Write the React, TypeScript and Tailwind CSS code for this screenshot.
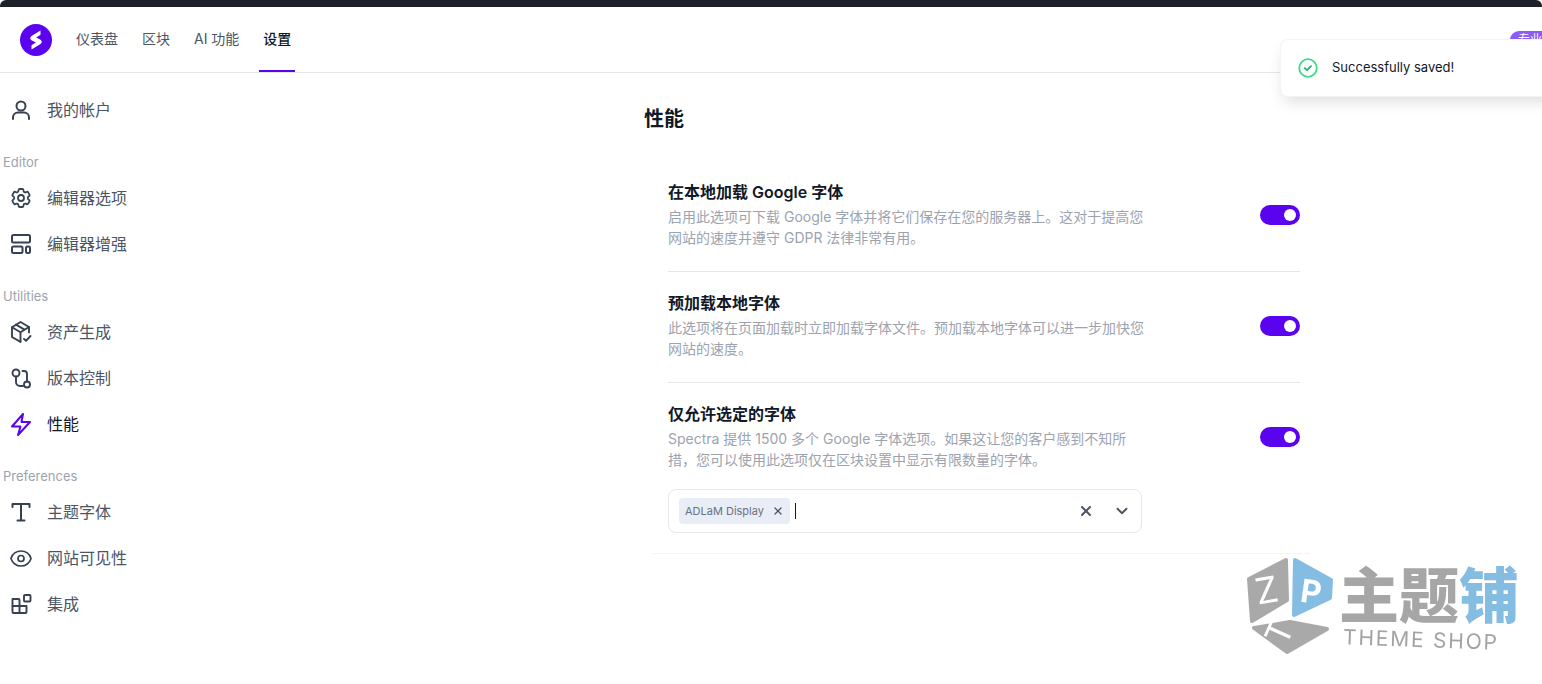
import React from "react";
import { ChevronDown, X } from "lucide-react";
import { HiOutlineCog6Tooth, HiOutlineEye } from "react-icons/hi2";

const fontStack = "font-['Inter','Noto_Sans_CJK_SC',sans-serif]";

type IconProps = { className?: string };

const Line = ({ className, children, width = 1.9 }: IconProps & { children: React.ReactNode; width?: number }) => (
  <svg viewBox="0 0 24 24" fill="none" stroke="currentColor" strokeWidth={width} strokeLinecap="round" strokeLinejoin="round" className={className}>
    {children}
  </svg>
);

const UserIcon = ({ className }: IconProps) => (
  <Line className={className} width={2}>
    <circle cx="12" cy="8" r="4.500" />
    <path d="M4 21v-1.500a5 5 0 0 1 5-5h6a5 5 0 0 1 5 5V21" />
  </Line>
);

const GearIcon = () => <HiOutlineCog6Tooth className="h-[26px] w-[26px]" strokeWidth={1.8} />;

const LayoutIcon = ({ className }: IconProps) => (
  <Line className={className} width={2}>
    <rect x="3" y="3" width="18" height="7.500" rx="1.500" />
    <rect x="3" y="14.500" width="10.500" height="6.500" rx="1.500" />
    <rect x="17" y="14.500" width="4" height="6.500" rx="1.500" />
  </Line>
);

const BoxCheckIcon = ({ className }: IconProps) => (
  <Line className={className}>
    <path d="M11.500 21.800 3 17V7.200L11.500 2l8.500 5v5.500" />
    <path d="M3 7.200l8.500 5 8.500-5.200M11.500 12.200v9.600M7 4.600l8.500 5" />
    <path d="M15 18.800l2 2 4.500-4.800" />
  </Line>
);

const BranchIcon = ({ className }: IconProps) => (
  <Line className={className}>
    <circle cx="7" cy="7" r="3.500" />
    <circle cx="18" cy="18.500" r="3" />
    <path d="M7 10.500V16a4 4 0 0 0 4 4h3" />
    <path d="M13.500 5h1.500a3 3 0 0 1 3 3v7.500" />
  </Line>
);

const BoltIcon = ({ className }: IconProps) => (
  <Line className={className} width={2}>
    <path d="M14 2 3 14.500h8.500L9 23l12-13h-8.500L14 2Z" />
  </Line>
);

const SerifTypeIcon = ({ className }: IconProps) => (
  <Line className={className} width={2}>
    <path d="M3.500 7V4h17v3M12 4v16.500M8.500 20.500h7" />
  </Line>
);

const EyeIcon = () => <HiOutlineEye className="h-[27px] w-[27px]" strokeWidth={1.7} />;

const BlocksIcon = ({ className }: IconProps) => (
  <Line className={className} width={1.9}>
    <rect x="15" y="3" width="6.500" height="6.500" rx="1" />
    <path d="M3.500 7h6a1 1 0 0 1 1 1v13h-6a1 1 0 0 1-1-1V7Z" />
    <path d="M3.500 14h14v6a1 1 0 0 1-1 1h-6" />
  </Line>
);

const SpectraLogo = () => (
  <svg viewBox="0 0 32 32" className="h-8 w-8 shrink-0">
    <circle cx="16" cy="16" r="16" fill="#5a03ef" />
    <path d="M20.500 6.500 11.500 12a2.500 2.500 0 0 0 0 4.300l4.300 2.200-4.300 2.700v4.300l9-5.500a2.500 2.500 0 0 0 0-4.300L16.200 13.500l4.300-2.700Z" fill="#fff" />
  </svg>
);

const SavedIcon = () => (
  <svg viewBox="0 0 20 20" fill="none" className="h-5 w-5 shrink-0">
    <circle cx="10" cy="10" r="8.800" stroke="#3ddc84" strokeWidth="1.800" />
    <path d="M6.800 10.200l2.200 2 4-4" stroke="#22b36b" strokeWidth="1.800" strokeLinecap="round" strokeLinejoin="round" />
  </svg>
);

const Watermark = () => (
  <div className="absolute left-[1243px] top-[556px] h-[104px] w-[280px] blur-[0.4px]">
    <svg viewBox="0 0 100 104" className="absolute left-0 top-0 h-[104px] w-[100px]">
      <g strokeWidth="4" strokeLinejoin="round">
        <path d="M43 4 6 23l3 42 35-21Z" fill="#a9a9a9" stroke="#a9a9a9" />
        <path d="M52 4l36 20-1 18-36 17Z" fill="#85bde2" stroke="#85bde2" />
        <path d="M47 66l37 7-40 23-33-24Z" fill="#a9a9a9" stroke="#a9a9a9" />
      </g>
      <text x="24" y="47" textAnchor="middle" fontSize="36" fill="#fff" fontFamily="Inter" transform="rotate(-10 24 36)">Z</text>
      <text x="68" y="47" textAnchor="middle" fontSize="32" fontWeight="700" fill="#fff" fontFamily="Inter" transform="rotate(8 68 36)">P</text>
      <text x="40" y="86" textAnchor="middle" fontSize="34" fill="#fff" fontFamily="Inter" transform="rotate(-66 40 78)">T</text>
    </svg>
    <div className="absolute left-[96px] top-[5px] flex text-[60px] leading-[62px] font-black whitespace-nowrap font-['Noto_Sans_CJK_SC',sans-serif]">
      <span className="text-[#a6a6a6]">主题</span>
      <span className="text-[#85bde2]">铺</span>
    </div>
    <div className="absolute left-[100px] top-[72px] rotate-[2deg] text-[21px] leading-6 tracking-[1.800px] whitespace-nowrap text-[#a3a3a3] font-['Inter',sans-serif]">
      THEME SHOP
    </div>
  </div>
);

const Toggle = () => (
  <div className="mt-[2px] flex h-5 w-10 shrink-0 items-center justify-end rounded-full bg-[#5a03ef] pr-[4px]">
    <div className="h-3 w-3 rounded-full bg-white" />
  </div>
);

const SideItem = ({ icon: Icon, label, active }: { icon: React.ComponentType<IconProps>; label: string; active?: boolean }) => (
  <div className={`flex h-[46px] items-center gap-[14px] pl-[9px] text-base ${active ? "text-[#111827]" : "text-[#4b5563]"}`}>
    <span className={`flex h-6 w-6 shrink-0 items-center justify-center ${active ? "text-[#5a03ef]" : "text-[#374151]"}`}>
      <Icon className="h-6 w-6" />
    </span>
    <span>{label}</span>
  </div>
);

const SideLabel = ({ children }: { children: React.ReactNode }) => (
  <div className="pl-[3px] text-[13px] leading-5 text-[#9ca3af]">{children}</div>
);

const SettingRow = ({ title, desc, children, last }: { title: string; desc: string; children?: React.ReactNode; last?: boolean }) => (
  <div className={`pt-[9px] ${last ? "" : "border-b border-[#e5e7eb] pb-[23px]"}`}>
    <div className="flex items-center justify-between">
      <div className="w-[476px]">
        <div className="mb-[2px] text-base leading-6 font-semibold text-[#111827]">{title}</div>
        <div className="text-[14px] leading-[21px] text-[#9ca3af]">{desc}</div>
      </div>
      <Toggle />
    </div>
    {children}
  </div>
);

const Tab = ({ label, active }: { label: string; active?: boolean }) => (
  <div className={`flex items-center border-b-2 px-1 ${active ? "border-[#5a03ef] font-medium text-[#111827]" : "border-transparent text-[#4b5563]"}`}>
    {label}
  </div>
);

export default function App() {
  return (
    <div className={`relative h-[684px] w-[1542px] overflow-hidden bg-white ${fontStack}`}>
      <div className="h-[7px] rounded-t-[6px] bg-[#1e2129]" />

      <header className="flex h-[66px] items-center border-b border-[#e5e7eb] pl-5">
        <SpectraLogo />
        <nav className="ml-5 flex h-full gap-4 text-[14px]">
          <Tab label="仪表盘" />
          <Tab label="区块" />
          <Tab label="AI 功能" />
          <Tab label="设置" active />
        </nav>
        <div className="ml-auto -mr-5 rounded-full bg-[#8b5cf6] px-2 text-[12px] leading-[18px] whitespace-nowrap text-white">专业版</div>
      </header>

      <div className="flex">
        <aside className="w-[300px] shrink-0 pt-[14px]">
          <SideItem icon={UserIcon} label="我的帐户" />
          <div className="mt-[19px]"><SideLabel>Editor</SideLabel></div>
          <div className="mt-[3px]">
            <SideItem icon={GearIcon} label="编辑器选项" />
            <SideItem icon={LayoutIcon} label="编辑器增强" />
          </div>
          <div className="mt-[19px]"><SideLabel>Utilities</SideLabel></div>
          <div className="mt-[3px]">
            <SideItem icon={BoxCheckIcon} label="资产生成" />
            <SideItem icon={BranchIcon} label="版本控制" />
            <SideItem icon={BoltIcon} label="性能" active />
          </div>
          <div className="mt-[19px]"><SideLabel>Preferences</SideLabel></div>
          <div className="mt-[3px]">
            <SideItem icon={SerifTypeIcon} label="主题字体" />
            <SideItem icon={EyeIcon} label="网站可见性" />
            <SideItem icon={BlocksIcon} label="集成" />
          </div>
        </aside>

        <main className="ml-[344px] w-[666px] pt-[32px]">
          <h1 className="text-[20px] leading-7 font-semibold text-[#111827]">性能</h1>
          <div className="mt-[38px] ml-2 border-b border-[#f3f4f6] pb-5 pl-4 pr-[10px]">
            <div className="flex flex-col gap-[10px]">
              <SettingRow title="在本地加载 Google 字体" desc="启用此选项可下载 Google 字体并将它们保存在您的服务器上。这对于提高您网站的速度并遵守 GDPR 法律非常有用。" />
              <SettingRow title="预加载本地字体" desc="此选项将在页面加载时立即加载字体文件。预加载本地字体可以进一步加快您网站的速度。" />
              <SettingRow last title="仅允许选定的字体" desc="Spectra 提供 1500 多个 Google 字体选项。如果这让您的客户感到不知所措，您可以使用此选项仅在区块设置中显示有限数量的字体。">
                <div className="mt-[19px] flex h-11 w-[474px] items-center rounded-lg border border-[#e5e7eb] px-[10px]">
                  <div className="flex h-[26px] items-center gap-[8px] rounded bg-[#e8edf6] px-[6px] text-[11px] text-[#6b7280]">
                    ADLaM Display
                    <X className="h-3 w-3 text-[#4b5563]" strokeWidth={2.500} />
                  </div>
                  <div className="ml-[5px] h-4 w-px bg-[#111827]" />
                  <X className="ml-auto h-4 w-4 text-[#4b5563]" strokeWidth={3} />
                  <ChevronDown className="ml-[19px] h-[18px] w-[18px] text-[#4b5563]" strokeWidth={2.500} />
                </div>
              </SettingRow>
            </div>
          </div>
        </main>
      </div>

      <Watermark />

      <div className="absolute left-[1280px] top-[39px] flex h-[58px] w-[300px] items-center gap-[14px] rounded-lg border border-[#f3f4f6] bg-white pl-[17px] text-[13px] text-[#111827] shadow-[0_8px_16px_-4px_rgba(0,0,0,0.14)]">
        <SavedIcon />
        Successfully saved!
      </div>
    </div>
  );
}
